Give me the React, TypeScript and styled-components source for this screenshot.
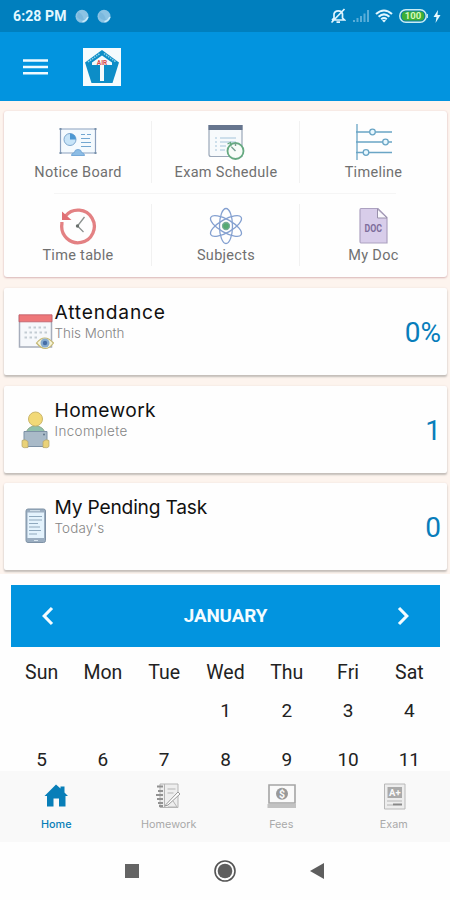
import React from "react";
import styled, { createGlobalStyle } from "styled-components";

const GlobalStyle = createGlobalStyle`
  * { box-sizing: border-box; }
  body { margin: 0; background: #fefefe; font-family: Roboto, "Liberation Sans", sans-serif; }
  svg { display: block; flex: none; }
`;

const Screen = styled.div`
  width: 450px;
  height: 900px;
  display: flex;
  flex-direction: column;
  overflow: hidden;
  background: #fefefe;
`;

const StatusBar = styled.header`
  flex: none;
  height: 32px;
  padding: 0 9px 0 13px;
  display: flex;
  align-items: center;
  justify-content: space-between;
  background: #007fbe;
  color: #e3f8ff;
`;

const StatusGroup = styled.div<{ $gap: number }>`
  display: flex;
  align-items: center;
  gap: ${(p) => p.$gap}px;
`;

const Clock = styled.span`
  font-size: 14px;
  font-weight: 700;
  line-height: 34px;
  letter-spacing: 0.1px;
`;

const Toolbar = styled.div`
  flex: none;
  height: 69px;
  padding: 1px 23px 0;
  display: flex;
  align-items: center;
  gap: 35px;
  background: #0294df;
`;

const Content = styled.main`
  flex: none;
  height: 473px;
  padding: 10px 3px 0 4px;
  display: flex;
  flex-direction: column;
  background: #fdf4ee;
`;

const MenuCard = styled.section`
  flex: none;
  height: 166px;
  margin-bottom: 11px;
  display: grid;
  grid-template-rows: 83px 83px;
  background: #fefefe;
  border-radius: 3px;
  box-shadow: 0 1px 2px #d9b9b9, 0 0 2px #efd5d5;
`;

const MenuRow = styled.div<{ $ruled?: boolean }>`
  display: grid;
  grid-template-columns: 148px 148px 147px;
  background: ${(p) =>
    p.$ruled ? "linear-gradient(#f5f5f5, #f5f5f5) 50px 100% / 342px 1px no-repeat" : "none"};
`;

const MenuItem = styled.div<{ $drop: number }>`
  display: flex;
  flex-direction: column;
  align-items: center;
  justify-content: space-between;
  padding: ${(p) => p.$drop}px 0 ${(p) => 24.5 - p.$drop}px;
  color: #707070;
  background: linear-gradient(#f1f1f1, #f1f1f1) 100% 10px / 1px 62px no-repeat;
  &:last-child { background: none; }
`;

const MenuLabel = styled.span`
  font-size: 14.5px;
  line-height: 18px;
  letter-spacing: 0.3px;
  white-space: nowrap;
`;

const StatCard = styled.section`
  flex: none;
  height: 87px;
  margin-bottom: 10.5px;
  padding: 0 7px 0 14px;
  display: flex;
  background: #fefefe;
  border-radius: 2px;
  box-shadow: 0 2px 2px #c3bdb9, 0 0 2px #ecdcd8;
`;

const StatIcon = styled.div`
  width: 36px;
  padding-top: 25px;
`;

const StatText = styled.div`
  flex: 1;
  padding: 12px 0 0 0.5px;
`;

const StatTitle = styled.h2<{ $spacing: number }>`
  margin: 0;
  font: 400 19.2px/25px Inter, sans-serif;
  letter-spacing: ${(p) => p.$spacing}px;
  color: #111;
`;

const StatCaption = styled.p<{ $spacing: number }>`
  margin: 0;
  font: 300 13.4px/17px Inter, sans-serif;
  letter-spacing: ${(p) => p.$spacing}px;
  color: #858585;
`;

const StatValue = styled.div`
  align-self: center;
  padding-top: 3px;
  margin-right: -1px;
  font-size: 28px;
  line-height: 32px;
  color: #087dbb;
`;

const Calendar = styled.section`
  flex: none;
  height: 197px;
  padding: 11px 10px 0 11px;
  overflow: hidden;
  background: #fefefe;
`;

const MonthBar = styled.div`
  height: 62px;
  padding: 0 27px;
  display: flex;
  align-items: center;
  justify-content: space-between;
  background: #0294df;
  color: #f4fcff;
`;

const MonthName = styled.span`
  font-size: 18.8px;
  font-weight: 700;
  letter-spacing: -0.1px;
`;

const Week = styled.div<{ $height: number; $names?: boolean }>`
  height: ${(p) => p.$height}px;
  display: grid;
  grid-template-columns: repeat(7, 1fr);
  align-items: center;
  justify-items: center;
  font-size: ${(p) => (p.$names ? 19.5 : 19)}px;
  color: #222;
`;

const BottomNav = styled.nav`
  flex: none;
  height: 71px;
  display: grid;
  grid-template-columns: repeat(4, 1fr);
  background: #f9f9f9;
`;

const Tab = styled.div<{ $active?: boolean }>`
  display: flex;
  flex-direction: column;
  align-items: center;
  gap: 8px;
  padding-top: 10px;
  color: ${(p) => (p.$active ? "#087eb8" : "#a9a9a9")};
  font: ${(p) => (p.$active ? 500 : 400)} 10.8px/14px Inter, sans-serif;
`;

const SystemNav = styled.footer`
  flex: none;
  height: 58px;
  padding: 0 125px 0 124px;
  display: flex;
  align-items: center;
  justify-content: space-between;
  background: #fefefe;
`;

const Droplet = () => (
  <svg width="14" height="15" viewBox="0 0 14 15">
    <circle cx="7" cy="7.3" r="6.5" fill="#8bc3e4" />
    <path d="M3 3Q8 5 9 11 5 12 2 8Z" fill="#7ab8dd" />
    <path d="M7.5 12.800Q11 12 13 8" fill="none" stroke="#c9ecfb" strokeWidth="1.5" />
  </svg>
);

const BellOff = () => (
  <svg width="16" height="16" viewBox="0 0 16 16" fill="none" stroke="#dff5ff" strokeWidth="1.7">
    <path d="M2 12h12.500l-2-2V6Q12 2.800 8.300 2.800T4 6v4L2 12M6.500 14.200h3.500M14.500 1 1.500 14.500" />
  </svg>
);

const Signal = () => (
  <svg width="18" height="14" viewBox="0 0 18 14" fill="#59add8">
    <path d="M1 11h2v2H1zM4.5 9h2v4h-2zM8 7h2v6H8zM11.5 4.500h2V13h-2zM15 1h2v12h-2z" />
  </svg>
);

const Wifi = () => (
  <svg width="18" height="14" viewBox="0 0 18 14" fill="none" stroke="#e1f7ff" strokeWidth="2.100">
    <path d="M1 5Q9-2 17 5M3.600 7.800Q9 3 14.400 7.800M6.200 10.200Q9 7.800 11.800 10.200" />
    <path d="m7 11.400 2 2.200 2-2.200q-2-1.500-4 0Z" fill="#e1f7ff" stroke="none" />
  </svg>
);

const Battery = () => (
  <svg width="29" height="14" viewBox="0 0 29 14">
    <rect x=".8" y=".8" width="26.400" height="12.400" rx="6" fill="#087ba6" stroke="#c9edf4" strokeWidth="1.5" />
    <rect x="2.800" y="2.600" width="22.400" height="8.800" rx="4" fill="#3cae36" />
    <path d="M28.300 5v4" stroke="#c9edf4" strokeWidth="1.200" />
    <text x="14" y="10.300" textAnchor="middle" fontFamily="Roboto" fontSize="9.500" fontWeight="700" fill="#d5f8bc">100</text>
  </svg>
);

const Bolt = () => (
  <svg width="8" height="13" viewBox="0 0 8 13" fill="#e8faff">
    <path d="M5 0 .5 7H3.500L2.500 13 7.500 5H4.500Z" />
  </svg>
);

const Burger = () => (
  <svg width="25" height="18" viewBox="0 0 25 18" stroke="#effaff" strokeWidth="2.400">
    <path d="M0 2.500h25M0 9h25M0 15.300h25" />
  </svg>
);

const Logo = () => (
  <svg width="38" height="38" viewBox="0 0 38 38">
    <path d="M0 0h38v38H0z" fill="#f5fbfd" />
    <path d="m19 2 17 12.500L29.500 35h-21L2 14.500Z" fill="#0d8dc7" />
    <path d="m19 7.500 10 7v2.500h-8v16h-4V17H9v-2.500Z" fill="#f5fafc" />
    <path d="M5 14 17 5.500M21 5.500l12 8.500" stroke="#91d4e9" strokeWidth="1.500" strokeDasharray="1.500 1" />
    <text x="19" y="16.700" textAnchor="middle" fontFamily="Roboto" fontSize="6.500" fontWeight="700" fill="#d84a4d">AIR</text>
  </svg>
);

const NoticeIcon = () => (
  <svg width="38" height="38" viewBox="0 0 38 38" fill="none">
    <path d="M1.500 6h35v24h-35Z" fill="#f4fafe" stroke="#8a9fbd" strokeWidth="1.200" />
    <circle cx="11" cy="16.500" r="6" fill="#c7e4f8" stroke="#7fa8cf" />
    <path d="M11 16.500v-6a6 6 0 0 1 6 6Z" fill="#4c98d3" />
    <path d="M22 11.500h4m2 0h4M22 15.500h9M22 19.500h10M22 23.500h10" stroke="#72a7d1" strokeWidth="1.200" />
    <path d="M12.500 32.500q0-2.500 3-3 0-3 3.500-3t3.500 3q3 .5 3 3Z" fill="#8dbde5" stroke="#76a9d8" />
    <path d="M.5 6h2M35.500 6h2M.5 30h2M35.500 30h2" stroke="#7890aa" strokeWidth="2" />
  </svg>
);

const ScheduleIcon = () => (
  <svg width="38" height="38" viewBox="0 0 38 38" fill="none">
    <path d="M2 2.500h33v31H4q-2 0-2-2Z" fill="#f7fafc" stroke="#9aa7b8" strokeWidth="1.200" />
    <path d="M1.500 2h34v5h-34Z" fill="#66758e" />
    <path d="M8 15h2m3 0h16M8 19h2m3 0h16M8 23h2m3 0h6M8 27h2m3 0h5" stroke="#a4c4da" />
    <circle cx="28.500" cy="28" r="8" fill="#f8fcf9" stroke="#65a980" strokeWidth="1.800" />
    <path d="m24.500 24 4 4M28.500 20v3" stroke="#799e92" strokeWidth="1.400" />
    <path d="m20.500 21 3-1.500.5 4" stroke="#65a980" strokeWidth="1.300" />
  </svg>
);

const TimelineIcon = () => (
  <svg width="38" height="38" viewBox="0 0 38 38" stroke="#6aa5c5" strokeWidth="1.300">
    <path d="M2 1v36M1 9h36M1 19h36M1 29.500h36" />
    <g fill="#e9f8ff">
      <circle cx="17.500" cy="9" r="2.800" />
      <circle cx="30.500" cy="19" r="2.800" />
      <circle cx="11" cy="29.500" r="2.800" />
    </g>
  </svg>
);

const TimeIcon = () => (
  <svg width="38" height="38" viewBox="0 0 38 38" fill="none">
    <path d="M6.500 9A16.300 16.300 0 1 1 2.900 17v-2" stroke="#e38183" strokeWidth="3.300" />
    <path d="M3 4.500v8.500h9.500Z" fill="#e07074" />
    <path d="m25.500 10-7 9 6 6" stroke="#8c9290" strokeWidth="1.300" />
    <circle cx="18.500" cy="19" r="1.700" fill="#686f6c" />
  </svg>
);

const SubjectsIcon = () => (
  <svg width="38" height="38" viewBox="0 0 38 38" fill="none" stroke="#84a0d0" strokeWidth="1.300">
    <ellipse cx="19" cy="19" rx="6.500" ry="17.500" />
    <ellipse cx="19" cy="19" rx="6.500" ry="17.500" transform="rotate(60 19 19)" />
    <ellipse cx="19" cy="19" rx="6.500" ry="17.500" transform="rotate(-60 19 19)" />
    <circle cx="19" cy="19" r="3.500" fill="#55aa72" stroke="#7aae9b" />
  </svg>
);

const DocIcon = () => (
  <svg width="38" height="38" viewBox="0 0 38 38">
    <path d="M6 1.500h17l9 9V36H6q-1 0-1-1.500V3q0-1.500 1-1.500Z" fill="#d8cdea" stroke="#aca1c0" strokeWidth="1.200" />
    <path d="M22.500 2v9H32Z" fill="#faf8fd" stroke="#9991ab" />
    <text x="18.300" y="24.700" textAnchor="middle" fontFamily="Roboto" fontWeight="700" fontSize="10" fill="#7e6e9c" textLength="17.500" lengthAdjust="spacingAndGlyphs">DOC</text>
  </svg>
);

const AttendanceIcon = () => (
  <svg width="36" height="38" viewBox="0 0 36 38">
    <path d="M1.500 3h32v31h-32Z" fill="#f6f8fb" stroke="#a6adbb" strokeWidth="1.500" />
    <path d="M1 1.800h33v7H1Z" fill="#ee7779" stroke="#bd5b66" strokeWidth=".8" />
    <path d="M10.500 14.500h19M6.500 19.500h23M6.500 24.500h14" stroke="#c3ccd3" strokeWidth="1.800" strokeDasharray="2.500 2.500" />
    <path d="M18.500 30q8-10 17 0-8 11-17 0Z" fill="#f6f4d7" stroke="#c4b773" strokeWidth="1.200" />
    <circle cx="27" cy="30" r="4.500" fill="#87acd1" />
    <circle cx="27" cy="30" r="2.200" fill="#466da4" />
  </svg>
);

const HomeworkIcon = () => (
  <svg width="36" height="38" viewBox="0 0 36 38">
    <path d="M8 30V22q2-7 9.500-7t9.500 7v8Z" fill="#8fc0aa" stroke="#8baa8c" />
    <circle cx="17.500" cy="8" r="7" fill="#f2d977" stroke="#cbb66b" />
    <path d="M6 20.500h23v15H6Z" fill="#a9bac8" stroke="#7c91a5" />
    <path d="M4 29.500q3-2 6 1v6q-5 1-6-1Zm27 0q-3-2-6 1v6q5 1 6-1Z" fill="#ead278" stroke="#b2a36a" strokeWidth=".7" />
    <circle cx="26" cy="23.500" r="1" fill="#60758b" />
  </svg>
);

const TaskIcon = () => (
  <svg width="36" height="38" viewBox="0 0 36 38">
    <rect x="8" y="1" width="19.500" height="33.500" rx="2" fill="#9baec1" stroke="#7f92a6" />
    <path d="M9.500 4.500h16.500V30H9.500Z" fill="#e4f3fd" />
    <path d="M11 8.500h13M11 12h13M11 15.500h9M11 19h11M11 22.500h12M11 26h8" stroke="#8fa9be" strokeWidth="1.200" />
    <path d="M16 32.500h4M12 2.700h10" stroke="#dbe7f0" />
  </svg>
);

const Chevron = ({ flip = false }: { flip?: boolean }) => (
  <svg width="20" height="20" viewBox="0 0 20 20" fill="none" stroke="#f4fcff" strokeWidth="3.100">
    <path d={flip ? "m6 2 7.800 8L6 18" : "m14 2-7.800 8 7.800 8"} />
  </svg>
);

const HomeTabIcon = () => (
  <svg width="30" height="29" viewBox="0 0 30 29">
    <path d="M3.500 15 15 3.500l4.500 4V5.500h4v6l3.500 3.500h-2.500v10.500h-6.500V17.500h-5.500v8H6V15Z" fill="#087eb8" />
  </svg>
);

const NotebookIcon = () => (
  <svg width="30" height="29" viewBox="0 0 30 29" fill="none" stroke="#b5b5b5">
    <path d="M6 3h18v23.500H6Z" fill="#eee" />
    <path d="M10.500 3v23.500M13.500 8h8M13.500 12h6" />
    <path d="M3 5.500h6M4 10h5M2 14h7M3 18h6M4 22h5M5 25h4" stroke="#929292" strokeWidth="1.800" />
    <path d="m12 23.500 12-12.500 2 2-12 11-3 1Z" fill="#fff" stroke="#999" />
    <path d="m19 20 4 6h-9" />
  </svg>
);

const FeesIcon = () => (
  <svg width="30" height="29" viewBox="0 0 30 29" fill="none">
    <path d="M3 4h26v18H3Z" fill="#fafafa" stroke="#a5a5a5" strokeWidth="1.600" />
    <path d="M1.500 24h28.500M1.500 26h28.500" stroke="#b0b0b0" strokeWidth="1.500" />
    <circle cx="16" cy="12.700" r="6" fill="#999" />
    <text x="16" y="16.500" textAnchor="middle" fontFamily="Roboto" fontSize="10.500" fontWeight="700" fill="#fafafa">$</text>
  </svg>
);

const ExamIcon = () => (
  <svg width="30" height="29" viewBox="0 0 30 29">
    <path d="M5.500 3h20.500v25H5.500Z" fill="#ededed" stroke="#b8b8b8" />
    <path d="M8.500 6H23v11H8.500Z" fill="#aaa" />
    <text x="15.800" y="15" textAnchor="middle" fontFamily="Roboto" fontSize="9.500" fontWeight="700" fill="#fafafa">A+</text>
    <path d="M8 20h15M8 24h6" stroke="#b5b5b5" />
    <path d="M14 23.500h9" stroke="#888" strokeWidth="2" />
  </svg>
);

const menu = [
  [
    { label: "Notice Board", icon: <NoticeIcon /> },
    { label: "Exam Schedule", icon: <ScheduleIcon /> },
    { label: "Timeline", icon: <TimelineIcon /> },
  ],
  [
    { label: "Time table", icon: <TimeIcon /> },
    { label: "Subjects", icon: <SubjectsIcon /> },
    { label: "My Doc", icon: <DocIcon /> },
  ],
];

const stats = [
  { title: "Attendance", caption: "This Month", value: "0%", icon: <AttendanceIcon />, spacing: 0.8, captionSpacing: 0 },
  { title: "Homework", caption: "Incomplete", value: "1", icon: <HomeworkIcon />, spacing: 0.4, captionSpacing: 0.4 },
  { title: "My Pending Task", caption: "Today's", value: "0", icon: <TaskIcon />, spacing: -0.2, captionSpacing: 0.15 },
];

const weekdays = ["Sun", "Mon", "Tue", "Wed", "Thu", "Fri", "Sat"];
const weeks = [
  ["", "", "", "1", "2", "3", "4"],
  ["5", "6", "7", "8", "9", "10", "11"],
];

const tabs = [
  { label: "Home", icon: <HomeTabIcon /> },
  { label: "Homework", icon: <NotebookIcon /> },
  { label: "Fees", icon: <FeesIcon /> },
  { label: "Exam", icon: <ExamIcon /> },
];

export default function App() {
  return (
    <Screen>
      <GlobalStyle />
      <StatusBar>
        <StatusGroup $gap={8}>
          <Clock>6:28 PM</Clock>
          <Droplet />
          <Droplet />
        </StatusGroup>
        <StatusGroup $gap={5.5}>
          <BellOff />
          <Signal />
          <Wifi />
          <Battery />
          <Bolt />
        </StatusGroup>
      </StatusBar>
      <Toolbar>
        <Burger />
        <Logo />
      </Toolbar>
      <Content>
        <MenuCard>
          {menu.map((row, i) => (
            <MenuRow key={i} $ruled={i === 0}>
              {row.map((item) => (
                <MenuItem key={item.label} $drop={i === 0 ? 12 : 12.5}>
                  {item.icon}
                  <MenuLabel>{item.label}</MenuLabel>
                </MenuItem>
              ))}
            </MenuRow>
          ))}
        </MenuCard>
        {stats.map((s) => (
          <StatCard key={s.title}>
            <StatIcon>{s.icon}</StatIcon>
            <StatText>
              <StatTitle $spacing={s.spacing}>{s.title}</StatTitle>
              <StatCaption $spacing={s.captionSpacing}>{s.caption}</StatCaption>
            </StatText>
            <StatValue>{s.value}</StatValue>
          </StatCard>
        ))}
      </Content>
      <Calendar>
        <MonthBar>
          <Chevron />
          <MonthName>JANUARY</MonthName>
          <Chevron flip />
        </MonthBar>
        <Week $height={50} $names>
          {weekdays.map((d) => <span key={d}>{d}</span>)}
        </Week>
        {weeks.map((week, i) => (
          <Week key={i} $height={i === 0 ? 26 : 73}>
            {week.map((d, j) => <span key={j}>{d}</span>)}
          </Week>
        ))}
      </Calendar>
      <BottomNav>
        {tabs.map((t, i) => (
          <Tab key={t.label} $active={i === 0}>
            {t.icon}
            <span>{t.label}</span>
          </Tab>
        ))}
      </BottomNav>
      <SystemNav>
        <svg width="16" height="16" viewBox="0 0 16 16"><path d="M1 1h14v14H1Z" fill="#646464" /></svg>
        <svg width="24" height="24" viewBox="0 0 24 24">
          <circle cx="12" cy="12" r="10" fill="none" stroke="#555" strokeWidth="1.600" />
          <circle cx="12" cy="12" r="7.300" fill="#5e5e5e" />
        </svg>
        <svg width="16" height="18" viewBox="0 0 16 18"><path d="M15 1v16L1 9Z" fill="#5e5e5e" /></svg>
      </SystemNav>
    </Screen>
  );
}
